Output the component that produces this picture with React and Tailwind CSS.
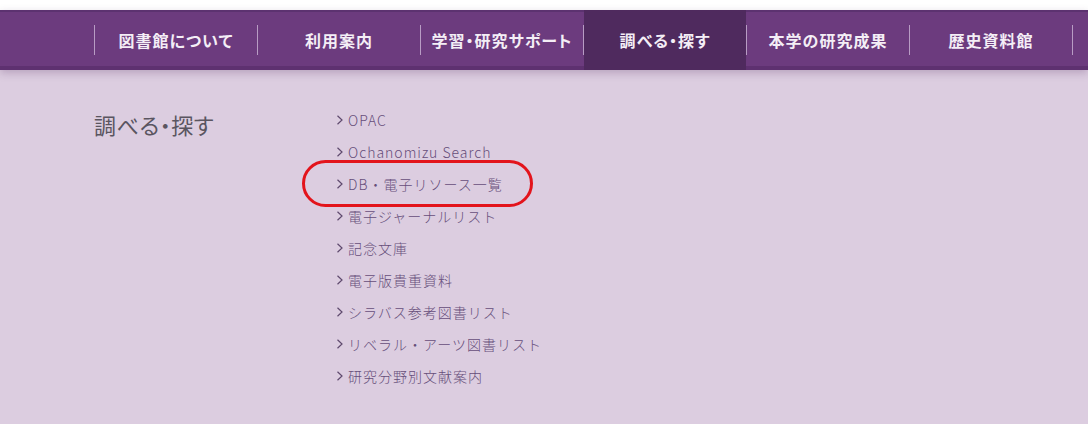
import React from "react";

const navItems = [
  "図書館について",
  "利用案内",
  "学習・研究サポート",
  "調べる・探す",
  "本学の研究成果",
  "歴史資料館",
];

const links = [
  "OPAC",
  "Ochanomizu Search",
  "DB・電子リソース一覧",
  "電子ジャーナルリスト",
  "記念文庫",
  "電子版貴重資料",
  "シラバス参考図書リスト",
  "リベラル・アーツ図書リスト",
  "研究分野別文献案内",
];

const Chevron = () => (
  <svg width="6" height="10" viewBox="0 0 6 10" className="mr-[5px] shrink-0">
    <polyline points="0.5,0.8 5,5 0.5,9.2" fill="none" stroke="#5f4a6e" strokeWidth="1.2" />
  </svg>
);

const App = () => {
  return (
    <div
      className="w-[1088px] h-[424px] overflow-hidden bg-[#dccde0]"
      style={{ fontFamily: '"Noto Sans CJK JP", "Noto Sans", sans-serif' }}
    >
      {/* top white strip */}
      <div className="h-[10px] bg-white" />

      {/* Global nav */}
      <div className="h-[60px] bg-[#6c3b7e] shadow-[inset_0_2px_0_#5c3270,inset_0_-4px_0_#5e3170,0_3px_8px_rgba(80,40,90,0.25)]">
        <div className="flex h-full pl-[94px]">
          <div className="w-px h-[30px] self-center bg-[#b89cc4]" />
          {navItems.map((item, i) => (
            <React.Fragment key={item}>
              <div
                className={`w-[162px] h-full flex items-center justify-center text-[16px] font-bold tracking-[1px] text-[#f4eef6] [font-feature-settings:'palt'] ${
                  i === 3 ? "bg-[#4f2a5e]" : ""
                }`}
              >
                {item}
              </div>
              <div className="w-px h-[30px] self-center bg-[#b89cc4]" />
            </React.Fragment>
          ))}
        </div>
      </div>

      {/* Content */}
      <div className="flex pl-[94px]">
        <div className="w-[243px] pt-[38px]">
          <h2 className="text-[22px] leading-[32px] text-[#5a5560] tracking-[0.5px] [font-feature-settings:'palt']">調べる・探す</h2>
        </div>
        <ul className="pt-[34px]">
          {links.map((link, i) => (
            <li key={link} className="relative flex items-center h-[32px] text-[14px] tracking-[1px] text-[#664d7a] font-light">
              {i === 2 && (
                <div className="absolute left-[-35px] top-[-8px] w-[231px] h-[47px] rounded-[24px] border-[3px] border-[#e3141c]" />
              )}
              <Chevron />
              {link}
            </li>
          ))}
        </ul>
      </div>
    </div>
  );
};

export default App;
